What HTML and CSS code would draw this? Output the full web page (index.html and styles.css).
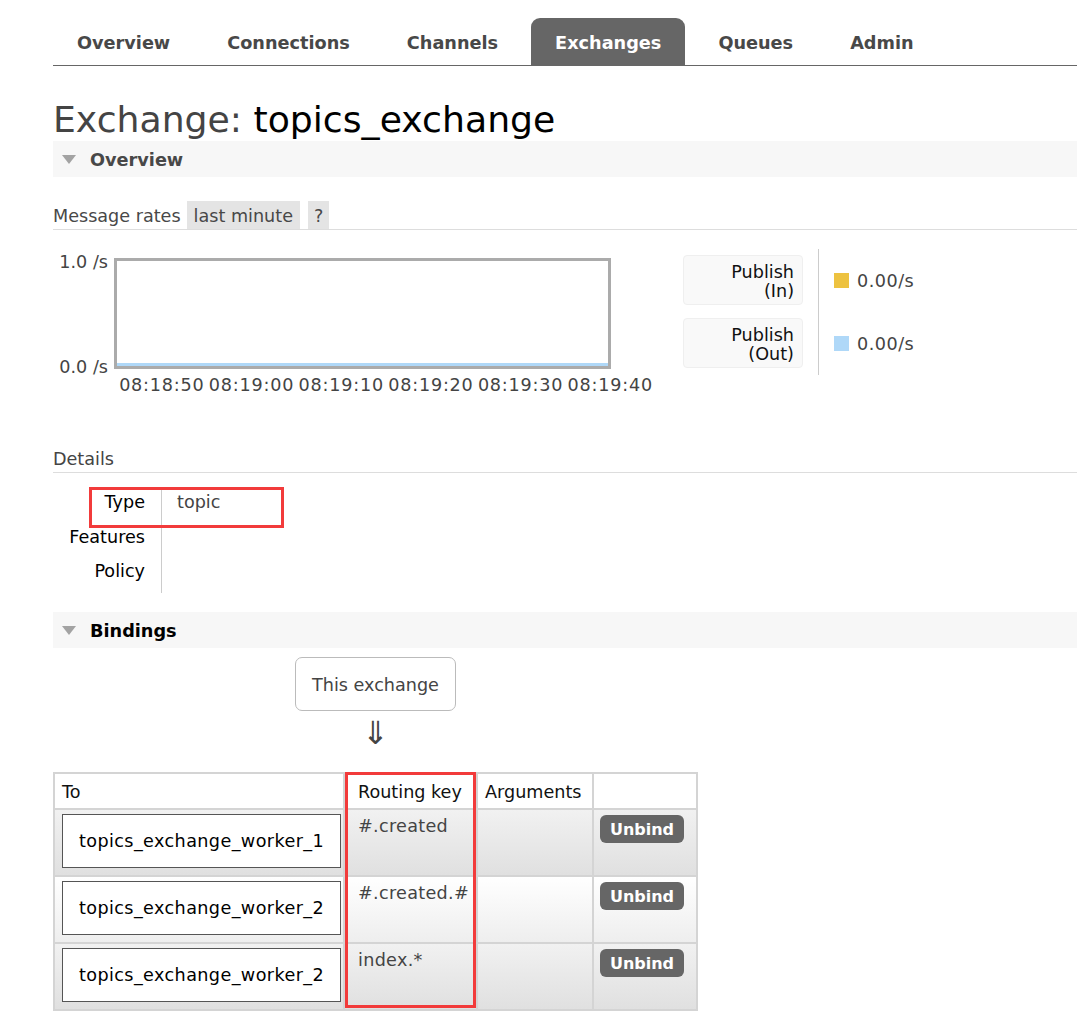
FILE: index.html
```html
<!DOCTYPE html>
<html lang="en">
<head>
<meta charset="utf-8">
<title>Exchange: topics_exchange</title>
<link rel="stylesheet" href="styles.css">
</head>
<body>
<div class="page">
  <nav class="tabs">
    <a class="tab">Overview</a>
    <a class="tab">Connections</a>
    <a class="tab">Channels</a>
    <a class="tab active">Exchanges</a>
    <a class="tab">Queues</a>
    <a class="tab">Admin</a>
  </nav>

  <h1 class="title"><span class="title-label">Exchange:</span> topics_exchange</h1>

  <section class="section">
    <h2 class="section-head section-head-muted"><span class="tri"></span>Overview</h2>

    <div class="rates-head">
      <span class="rates-title">Message rates</span>
      <span class="chip">last minute</span>
      <span class="chip chip-q">?</span>
    </div>

    <div class="rates">
      <div class="chart">
        <div class="plot-row">
          <div class="yaxis"><span>1.0 /s</span><span>0.0 /s</span></div>
          <div class="plot"><div class="series"></div></div>
        </div>
        <div class="xaxis">
          <span>08:18:50</span><span>08:19:00</span><span>08:19:10</span><span>08:19:20</span><span>08:19:30</span><span>08:19:40</span>
        </div>
      </div>
      <div class="legend">
        <div class="legend-labels">
          <div class="legend-label">Publish<br>(In)</div>
          <div class="legend-label">Publish<br>(Out)</div>
        </div>
        <div class="legend-values">
          <div class="legend-value"><span class="swatch swatch-in"></span>0.00/s</div>
          <div class="legend-value"><span class="swatch swatch-out"></span>0.00/s</div>
        </div>
      </div>
    </div>

    <div class="details-head">Details</div>
    <div class="details">
      <div class="dt">Type</div><div class="dd">topic</div>
      <div class="dt">Features</div><div class="dd"></div>
      <div class="dt">Policy</div><div class="dd"></div>
    </div>
  </section>

  <section class="section">
    <h2 class="section-head"><span class="tri"></span>Bindings</h2>
    <div class="bindings">
      <div class="source">
        <div class="this-exchange">This exchange</div>
        <div class="arrow">⇓</div>
      </div>
      <table class="bind-table">
        <colgroup>
          <col class="c-to"><col class="c-rk"><col class="c-args"><col class="c-act">
        </colgroup>
        <thead>
          <tr><th>To</th><th class="th-rk">Routing key</th><th>Arguments</th><th></th></tr>
        </thead>
        <tbody>
          <tr class="alt1">
            <td class="td-to"><div class="queue">topics_exchange_worker_1</div></td>
            <td class="td-rk">#.created</td>
            <td></td>
            <td class="td-act"><span class="btn">Unbind</span></td>
          </tr>
          <tr class="alt2">
            <td class="td-to"><div class="queue">topics_exchange_worker_2</div></td>
            <td class="td-rk">#.created.#</td>
            <td></td>
            <td class="td-act"><span class="btn">Unbind</span></td>
          </tr>
          <tr class="alt1">
            <td class="td-to"><div class="queue">topics_exchange_worker_2</div></td>
            <td class="td-rk">index.*</td>
            <td></td>
            <td class="td-act"><span class="btn">Unbind</span></td>
          </tr>
        </tbody>
      </table>
    </div>
  </section>

  <div class="annot annot-type"></div>
  <div class="annot annot-rk"></div>
</div>
</body>
</html>
```

FILE: styles.css
```css
html, body {
  margin: 0;
  padding: 0;
  background: #ffffff;
}

body {
  font-family: "DejaVu Sans", Verdana, sans-serif;
  font-size: 17.6px;
  line-height: 21px;
  color: #484848;
}

.page {
  position: relative;
  margin-left: 53px;
  padding-top: 18px;
}

/* ---------- tabs ---------- */
.tabs {
  display: flex;
  gap: 9px;
  height: 47px;
  border-bottom: 1px solid #666666;
}

.tab {
  display: flex;
  align-items: center;
  padding: 4px 24px 0;
  font-weight: bold;
  font-size: 17.7px;
  color: #484848;
  text-decoration: none;
}

.tab.active {
  background: #666666;
  color: #ffffff;
  border-radius: 9px 9px 0 0;
}

/* ---------- title ---------- */
.title {
  margin: 33px 0 0;
  font-size: 36.2px;
  line-height: 42px;
  font-weight: normal;
  color: #000000;
}

.title-label {
  color: #444444;
}

/* ---------- section header ---------- */
.section-head {
  margin: 0;
  height: 36px;
  box-sizing: border-box;
  display: flex;
  align-items: center;
  padding: 2px 0 0 9px;
  background: #f7f7f7;
  font-size: 17.7px;
  font-weight: bold;
  color: #000000;
}

.section-head-muted {
  color: #484848;
}

.tri {
  width: 0;
  height: 0;
  margin-top: -2px;
  border-left: 7.5px solid transparent;
  border-right: 7.5px solid transparent;
  border-top: 9px solid #a3a3a3;
  margin-right: 14px;
}

/* ---------- message rates ---------- */
.rates-head {
  margin-top: 24px;
  display: flex;
  align-items: center;
  border-bottom: 1px solid #dddddd;
}

.rates-title {
  padding-top: 2px;
}

.chip {
  height: 28px;
  box-sizing: border-box;
  line-height: 28px;
  padding: 1px 7px 0;
  margin-left: 6px;
  background: #e4e4e4;
}

.chip-q {
  margin-left: 8px;
  padding: 1px 6px 0;
}

.rates {
  display: flex;
  align-items: flex-start;
}

.chart {
  width: 600px;
  margin-top: 28px;
}

.plot-row {
  display: flex;
}

.yaxis {
  width: 61px;
  box-sizing: border-box;
  padding-right: 6px;
  margin: -6.5px 0 -8.5px;
  display: flex;
  flex-direction: column;
  justify-content: space-between;
  align-items: flex-end;
  color: #444444;
}

.plot {
  width: 497px;
  height: 111px;
  box-sizing: border-box;
  border: 3px solid #ababab;
  display: flex;
  flex-direction: column;
  justify-content: flex-end;
}

.series {
  height: 3px;
  background: #afd8f8;
}

.xaxis {
  display: flex;
  margin-left: 64px;
  margin-top: 5.5px;
  color: #444444;
  letter-spacing: 0.8px;
}

.xaxis span {
  width: 89.7px;
  flex: none;
  text-align: center;
  white-space: nowrap;
}

.legend {
  display: flex;
  margin-left: 30px;
  margin-top: 19px;
}

.legend-labels {
  display: flex;
  flex-direction: column;
  gap: 13px;
  padding: 6px 0 7px;
}

.legend-label {
  width: 120px;
  height: 50px;
  box-sizing: border-box;
  padding: 7px 8px 0 0;
  text-align: right;
  line-height: 19px;
  background: #f9f9f9;
  border: 1px solid #efefef;
  border-radius: 4px;
  color: #111111;
}

.legend-values {
  margin-left: 15px;
  border-left: 1px solid #cccccc;
  padding: 6px 0 7px 15px;
  display: flex;
  flex-direction: column;
  gap: 13px;
}

.legend-value {
  height: 50px;
  box-sizing: border-box;
  padding-top: 2px;
  display: flex;
  align-items: center;
  gap: 8px;
  color: #444444;
  letter-spacing: 0.5px;
}

.swatch {
  width: 15px;
  height: 15px;
  flex: none;
  margin-top: -2px;
}

.swatch-in {
  background: #edc240;
}

.swatch-out {
  background: #afd8f8;
}

/* ---------- details ---------- */
.details-head {
  margin-top: 53px;
  padding-bottom: 2.5px;
  border-bottom: 1px solid #dddddd;
  color: #444444;
}

.details {
  margin-top: 17px;
  display: grid;
  grid-template-columns: 108px 300px;
  grid-template-rows: 35px 34px 34px;
  line-height: 22px;
}

.dt {
  text-align: right;
  padding: 1px 16px 0 0;
  color: #000000;
}

.dd {
  border-left: 1px solid #cccccc;
  padding: 1px 0 0 15px;
  color: #444444;
}

/* ---------- bindings ---------- */
.section + .section {
  margin-top: 19px;
}

.bindings {
  width: 645px;
}

.source {
  display: flex;
  flex-direction: column;
  align-items: center;
  margin-top: 9px;
}

.this-exchange {
  width: 161px;
  height: 54px;
  box-sizing: border-box;
  padding-top: 3px;
  border: 1px solid #bbbbbb;
  border-radius: 7px;
  display: flex;
  align-items: center;
  justify-content: center;
  color: #444444;
}

.arrow {
  margin-top: 7px;
  font-size: 32px;
  line-height: 30px;
  height: 30px;
  color: #444444;
}

.bind-table {
  margin-top: 24px;
  width: 645px;
  table-layout: fixed;
  border-collapse: separate;
  border-spacing: 2px;
  background: #d4d4d4;
}

.c-to { width: 288px; }
.c-rk { width: 131px; }
.c-args { width: 114px; }
.c-act { width: 102px; }

.bind-table th {
  height: 34px;
  box-sizing: border-box;
  padding: 3px 7px 0;
  vertical-align: middle;
  background: #ffffff;
  text-align: left;
  font-weight: normal;
  color: #111111;
  white-space: nowrap;
}

.bind-table th.th-rk {
  padding-left: 13px;
}

.bind-table td {
  height: 65px;
  box-sizing: border-box;
  vertical-align: top;
  padding: 4px 7px;
  color: #444444;
}

.bind-table tr.alt1 td {
  background: linear-gradient(to bottom, #f1f1f1, #e0e0e0);
}

.bind-table tr.alt2 td {
  background: linear-gradient(to bottom, #ffffff, #eeeeee);
}

.bind-table td.td-to {
  padding: 4px 2px 7px 7px;
}

.bind-table td.td-rk {
  padding: 6px 6px 4px 13px;
  white-space: nowrap;
  letter-spacing: 0.3px;
}

.bind-table td.td-act {
  padding: 5px 6px;
}

.queue {
  width: 279px;
  height: 54px;
  box-sizing: border-box;
  padding-top: 1px;
  border: 1px solid #555555;
  background: #ffffff;
  color: #000000;
  display: flex;
  align-items: center;
  justify-content: center;
  letter-spacing: 0.4px;
}

.btn {
  display: block;
  width: 84px;
  height: 28px;
  box-sizing: border-box;
  padding-top: 1px;
  line-height: 27px;
  background: #666666;
  color: #ffffff;
  border-radius: 6px;
  font-weight: bold;
  font-size: 16px;
  text-align: center;
}

/* ---------- red annotations ---------- */
.annot {
  position: absolute;
  box-sizing: border-box;
  border: 3px solid #f23b3b;
}

.annot-type {
  left: 36px;
  top: 487px;
  width: 195px;
  height: 41px;
}

.annot-rk {
  left: 292px;
  top: 772px;
  width: 131px;
  height: 236px;
}
```
